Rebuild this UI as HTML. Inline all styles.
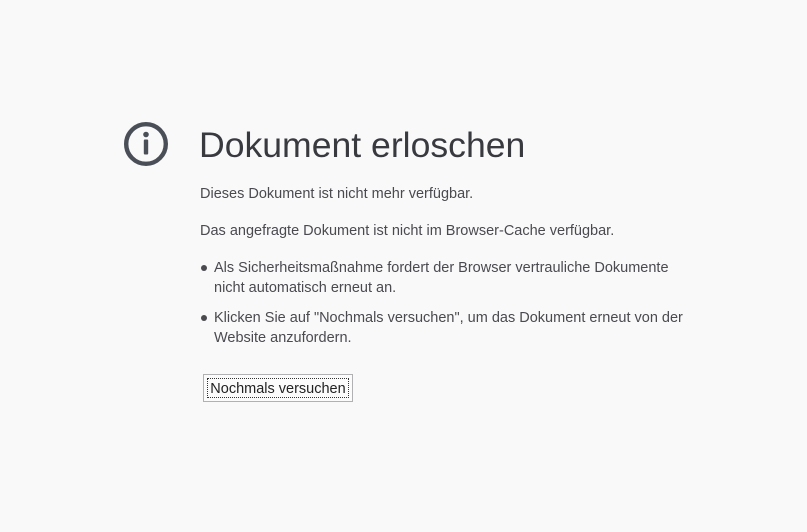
<!DOCTYPE html>
<html><head><meta charset="utf-8"><style>
html,body{margin:0;width:807px;height:532px;background:#f9f9fa;overflow:hidden}
body{font-family:"Liberation Sans","DejaVu Sans",sans-serif;color:#4a4a4f;position:relative}
.t{position:absolute;white-space:nowrap;font-size:14.5px;line-height:20px}
h1{position:absolute;left:199px;top:121px;margin:0;font-weight:300;font-size:35.6px;line-height:48px;color:#393a40;letter-spacing:0}
.dot{position:absolute;width:6px;height:6px;border-radius:50%;background:#4a4a4f;left:201px}
.btn{position:absolute;left:203px;top:374px;width:148px;height:26px;border:1px solid #b1b1b3;background:#fbfbfb;box-sizing:content-box}
.btn span{position:absolute;left:3px;top:3px;right:3px;bottom:3px;border:1px dotted #333;font-size:14.5px;line-height:20px;text-align:center;color:#222}
</style></head><body>
<svg style="position:absolute;left:123px;top:121px" width="46" height="46" viewBox="0 0 46 46">
<circle cx="23" cy="23" r="19.8" fill="none" stroke="#4a4f57" stroke-width="4.4"/>
<circle cx="23" cy="13.5" r="2.8" fill="#4a4f57"/>
<rect x="20.8" y="18.5" width="4.4" height="15" rx="1" fill="#4a4f57"/>
</svg>
<h1>Dokument erloschen</h1>
<div class="t" style="left:200px;top:184px">Dieses Dokument ist nicht mehr verfügbar.</div>
<div class="t" style="left:200px;top:221px">Das angefragte Dokument ist nicht im Browser-Cache verfügbar.</div>
<div class="dot" style="top:265px"></div>
<div class="t" style="left:214px;top:258px">Als Sicherheitsmaßnahme fordert der Browser vertrauliche Dokumente</div>
<div class="t" style="left:214px;top:278px">nicht automatisch erneut an.</div>
<div class="dot" style="top:315px"></div>
<div class="t" style="left:214px;top:308px">Klicken Sie auf "Nochmals versuchen", um das Dokument erneut von der</div>
<div class="t" style="left:214px;top:328px">Website anzufordern.</div>
<div class="btn"><span>Nochmals versuchen</span></div>
</body></html>
